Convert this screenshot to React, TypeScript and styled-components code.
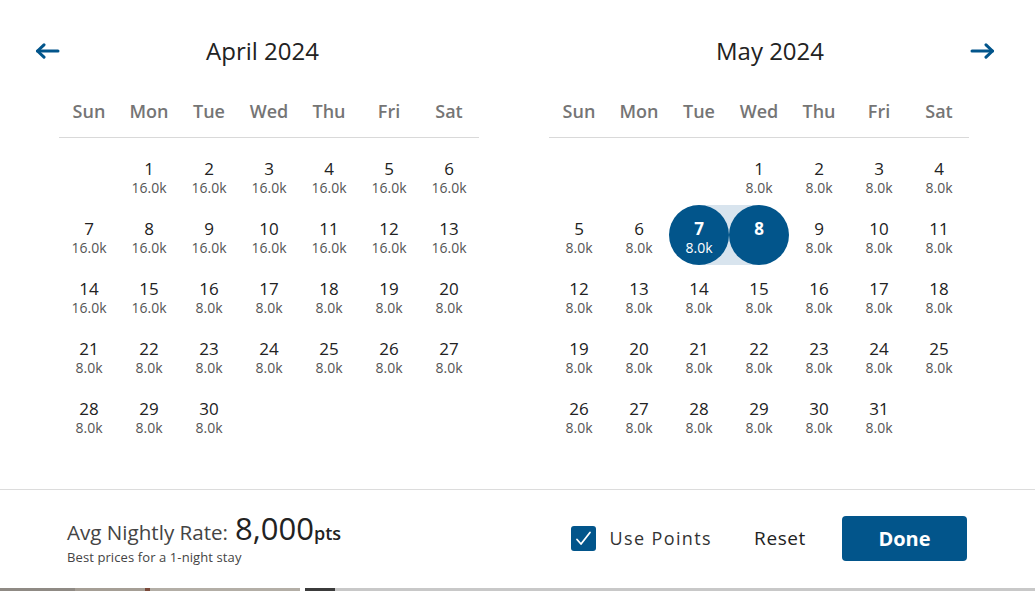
import React from 'react';
import styled, { createGlobalStyle } from 'styled-components';

const BLUE = '#02558b';

const GlobalStyle = createGlobalStyle`
  html, body {
    margin: 0;
    padding: 0;
    background: #c8c8c8;
    font-family: 'Open Sans', 'Noto Sans', sans-serif;
    color: #222;
  }
`;

const Modal = styled.div`
  width: 1035px;
  height: 588px;
  background: #fff;
  display: flex;
  flex-direction: column;
`;

const NavRow = styled.div`
  display: grid;
  grid-template-columns: 25px 1fr 1fr 25px;
  align-items: center;
  padding: 32px 40px 0 35px;
  height: 38px;
`;

const NavButton = styled.button`
  border: 0;
  background: none;
  padding: 0;
  width: 25px;
  height: 16px;
  display: flex;
  align-items: center;
  cursor: pointer;
`;

const MonthTitle = styled.div<{ $side: 'left' | 'right' }>`
  text-align: center;
  font-size: 24px;
  font-weight: 500;
  line-height: 38px;
  color: #222;
  padding-left: ${(p) => (p.$side === 'right' ? '55px' : '0')};
  padding-right: ${(p) => (p.$side === 'left' ? '50px' : '0')};
`;

const MonthsRow = styled.div`
  display: flex;
  gap: 70px;
  padding: 15px 0 0 59px;
  height: 404px;
`;

const Month = styled.div`
  width: 420px;
`;

const WeekHeader = styled.div`
  display: grid;
  grid-template-columns: repeat(7, 60px);
  height: 52px;
  align-items: center;
  border-bottom: 1px solid #d9d9d9;
  margin-bottom: 7px;
`;

const WeekDay = styled.div`
  text-align: center;
  font-size: 18px;
  font-weight: 600;
  color: #757575;
`;

const DaysGrid = styled.div`
  display: grid;
  grid-template-columns: repeat(7, 60px);
  grid-auto-rows: 60px;
`;

type Edge = 'start' | 'end' | undefined;

const DayCell = styled.div<{ $edge: Edge }>`
  display: flex;
  align-items: center;
  justify-content: center;
  background: ${(p) =>
    p.$edge === 'start'
      ? 'linear-gradient(to right, transparent 50%, #d8e4ee 50%)'
      : p.$edge === 'end'
        ? 'linear-gradient(to right, #d8e4ee 50%, transparent 50%)'
        : 'transparent'};
`;

const DayInner = styled.div<{ $selected: boolean }>`
  width: 60px;
  height: 60px;
  border-radius: 50%;
  display: flex;
  flex-direction: column;
  align-items: center;
  justify-content: center;
  padding-top: 6px;
  box-sizing: border-box;
  background: ${(p) => (p.$selected ? BLUE : 'transparent')};
  color: ${(p) => (p.$selected ? '#fff' : '#222')};
`;

const DayNum = styled.div<{ $selected: boolean }>`
  font-size: 17px;
  line-height: 20px;
  font-weight: ${(p) => (p.$selected ? 700 : 500)};
`;

const Price = styled.div<{ $selected: boolean }>`
  font-size: 14px;
  line-height: 18px;
  color: ${(p) => (p.$selected ? '#fff' : '#555')};
  min-height: 18px;
`;

const Footer = styled.div`
  border-top: 1px solid #dcdcdc;
  flex: 1;
  display: flex;
  align-items: center;
  padding: 0 68px 2px 67px;
`;

const RateBlock = styled.div`
  display: flex;
  flex-direction: column;
  gap: 2px;
`;

const RateLine = styled.div`
  display: flex;
  align-items: baseline;
  color: #444;
  font-size: 20.6px;
  line-height: 36px;
  height: 36px;
`;

const RateValue = styled.span`
  font-size: 31px;
  font-weight: 500;
  color: #222;
  margin-left: 7px;
`;

const RateUnit = styled.span`
  font-size: 18px;
  font-weight: 600;
  color: #222;
`;

const RateNote = styled.div`
  font-size: 13px;
  line-height: 18px;
  letter-spacing: 0.1px;
  color: #444;
`;

const Actions = styled.div`
  margin-left: auto;
  display: flex;
  align-items: center;
`;

const CheckLabel = styled.label`
  display: flex;
  align-items: center;
  gap: 13px;
  font-size: 18px;
  letter-spacing: 1.4px;
  color: #333;
  margin-right: 42px;
`;

const CheckBox = styled.span`
  width: 25px;
  height: 25px;
  border-radius: 3px;
  background: ${BLUE};
  display: flex;
  align-items: center;
  justify-content: center;
`;

const ResetButton = styled.button`
  border: 0;
  background: none;
  padding: 0;
  font-family: inherit;
  font-size: 19px;
  letter-spacing: 0.6px;
  color: #222;
  margin-right: 36px;
`;

const DoneButton = styled.button`
  width: 125px;
  height: 45px;
  border: 0;
  border-radius: 4px;
  background: ${BLUE};
  color: #fff;
  font-family: inherit;
  font-size: 20px;
  font-weight: 700;
`;

const Backdrop = styled.div`
  height: 3px;
  display: flex;
`;

const BackdropPart = styled.div<{ $w: number; $c: string }>`
  width: ${(p) => p.$w}px;
  background: ${(p) => p.$c};
`;

const Arrow = ({ dir }: { dir: 'left' | 'right' }) => (
  <svg width="25" height="16" viewBox="0 0 25 16" fill="none">
    <g stroke={BLUE} strokeWidth="3" strokeLinecap="round" strokeLinejoin="round"
      transform={dir === 'right' ? 'translate(25 0) scale(-1 1)' : undefined}>
      <path d="M2.5 8H23" />
      <path d="M9 1.8L2.5 8L9 14.2" />
    </g>
  </svg>
);

const weekDays = ['Sun', 'Mon', 'Tue', 'Wed', 'Thu', 'Fri', 'Sat'];

interface MonthData {
  offset: number;
  days: number;
  price: (d: number) => string;
}

const april: MonthData = { offset: 1, days: 30, price: (d) => (d <= 15 ? '16.0k' : '8.0k') };
const may: MonthData = { offset: 3, days: 31, price: () => '8.0k' };

function MonthGrid ({ data, start, end }: { data: MonthData; start?: number; end?: number }) {
  const cells: React.ReactNode[] = [];
  for (let i = 0; i < data.offset; i++) cells.push(<div key={`e${i}`} />);
  for (let d = 1; d <= data.days; d++) {
    const edge: Edge = d === start ? 'start' : d === end ? 'end' : undefined;
    const selected = Boolean(edge);
    cells.push(
      <DayCell key={d} $edge={edge}>
        <DayInner $selected={selected}>
          <DayNum $selected={selected}>{d}</DayNum>
          <Price $selected={selected}>{d === end ? '' : data.price(d)}</Price>
        </DayInner>
      </DayCell>
    );
  }
  return (
    <Month>
      <WeekHeader>
        {weekDays.map((w) => <WeekDay key={w}>{w}</WeekDay>)}
      </WeekHeader>
      <DaysGrid>{cells}</DaysGrid>
    </Month>
  );
}

export default function App () {
  return (
    <>
      <GlobalStyle />
      <Modal>
        <NavRow>
          <NavButton aria-label="Previous month"><Arrow dir="left" /></NavButton>
          <MonthTitle $side="left">April 2024</MonthTitle>
          <MonthTitle $side="right">May 2024</MonthTitle>
          <NavButton aria-label="Next month"><Arrow dir="right" /></NavButton>
        </NavRow>
        <MonthsRow>
          <MonthGrid data={april} />
          <MonthGrid data={may} start={7} end={8} />
        </MonthsRow>
        <Footer>
          <RateBlock>
            <RateLine>
              Avg Nightly Rate:
              <RateValue>8,000</RateValue>
              <RateUnit>pts</RateUnit>
            </RateLine>
            <RateNote>Best prices for a 1-night stay</RateNote>
          </RateBlock>
          <Actions>
            <CheckLabel>
              <CheckBox>
                <svg width="17" height="15" viewBox="0 0 17 15" fill="none">
                  <path d="M2 8.5L6 13L15 1.5" stroke="#fff" strokeWidth="1.8" strokeLinecap="round" strokeLinejoin="round" />
                </svg>
              </CheckBox>
              Use Points
            </CheckLabel>
            <ResetButton>Reset</ResetButton>
            <DoneButton>Done</DoneButton>
          </Actions>
        </Footer>
      </Modal>
      <Backdrop>
        <BackdropPart $w={75} $c="#8f8a84" />
        <BackdropPart $w={70} $c="#a59e95" />
        <BackdropPart $w={5} $c="#7a4a3a" />
        <BackdropPart $w={150} $c="#b3aea6" />
        <BackdropPart $w={5} $c="#fff" />
        <BackdropPart $w={30} $c="#3b3b3b" />
        <BackdropPart $w={700} $c="#c8c8c8" />
      </Backdrop>
    </>
  );
}
